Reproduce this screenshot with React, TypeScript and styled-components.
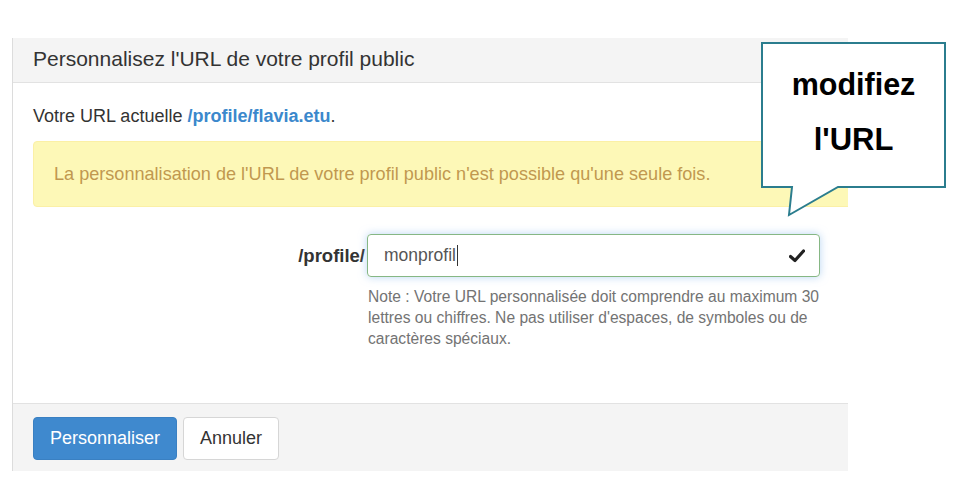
import React from "react";
import styled, { createGlobalStyle } from "styled-components";

const Global = createGlobalStyle`
  html, body { margin: 0; padding: 0; background: #fff; }
  body { font-family: "Liberation Sans", Arial, sans-serif; color: #333; }
  * { box-sizing: border-box; }
`;

const Page = styled.div`
  position: relative;
  width: 964px;
  height: 489px;
  padding-top: 38px;
  padding-left: 12px;
  overflow: hidden;
`;

const Clip = styled.div`
  width: 836px;
  overflow: hidden;
`;

const Panel = styled.div`
  width: 880px;
  border-left: 1px solid #dcdcdc;
  background: #fff;
`;

const Header = styled.div`
  height: 45px;
  background: #f4f4f4;
  border-bottom: 1px solid #e2e2e2;
  padding: 0 20px 3px 20px;
  display: flex;
  align-items: center;
  font-size: 21px;
  color: #333;
`;

const Body = styled.div`
  padding: 22px 20px 54px 20px;
`;

const Current = styled.p`
  margin: 0 0 14px 0;
  font-size: 18px;
  line-height: 22px;
`;

const Link = styled.a`
  color: #3b88cc;
  font-weight: bold;
  text-decoration: none;
`;

const Alert = styled.div`
  height: 66px;
  background: #fdf8b7;
  border: 1px solid #fbf0a6;
  border-radius: 4px;
  padding: 0 20px;
  display: flex;
  align-items: center;
  font-size: 18.1px;
  color: #c1984f;
`;

const FormRow = styled.div`
  margin-top: 27px;
  display: grid;
  grid-template-columns: 332px 453px;
  column-gap: 2px;
`;

const Label = styled.label`
  font-size: 18.5px;
  font-weight: bold;
  color: #333;
  text-align: right;
  line-height: 43px;
`;

const Field = styled.div`
  position: relative;
  height: 43px;
  border: 1px solid #86b784;
  border-radius: 4px;
  box-shadow: 0 0 8px rgba(130, 180, 235, 0.55);
  display: flex;
  align-items: center;
  padding: 0 16px;
  font-size: 17.5px;
  color: #555;
`;

const Caret = styled.span`
  display: inline-block;
  width: 1px;
  height: 21px;
  background: #333;
  margin-left: 1px;
`;

const Check = styled.svg`
  position: absolute;
  right: 14px;
  top: 14px;
`;

const Help = styled.p`
  grid-column: 2;
  margin: 9px 0 0 1px;
  font-size: 15.6px;
  line-height: 21px;
  color: #737373;
  width: 460px;
`;

const Footer = styled.div`
  height: 68px;
  background: #f4f4f4;
  border-top: 1px solid #e2e2e2;
  padding: 13px 20px 0 20px;
  display: flex;
  gap: 6px;
`;

const Button = styled.button<{ $primary?: boolean }>`
  height: 43px;
  padding: 0 16px;
  font-family: "Liberation Sans", Arial, sans-serif;
  font-size: 18px;
  border-radius: 4px;
  border: 1px solid ${(p) => (p.$primary ? "#3a80c2" : "#d6d6d6")};
  background: ${(p) => (p.$primary ? "#3f89ce" : "#fff")};
  color: ${(p) => (p.$primary ? "#fff" : "#333")};
`;

const Callout = styled.div`
  position: absolute;
  left: 760px;
  top: 41px;
  width: 190px;
  height: 180px;
`;

const CalloutText = styled.div`
  position: absolute;
  left: 2px;
  top: 2px;
  width: 183px;
  height: 144px;
  display: flex;
  flex-direction: column;
  align-items: center;
  font-family: "Liberation Sans", Arial, sans-serif;
  font-weight: bold;
  color: #000;
  padding-top: 24px;
`;

const Line = styled.div<{ $size: number; $gap: number }>`
  font-size: ${(p) => p.$size}px;
  line-height: ${(p) => p.$size + 4}px;
  margin-top: ${(p) => p.$gap}px;
`;

export default function App() {
  return (
    <Page>
      <Global />
      <Clip>
        <Panel>
          <Header>Personnalisez l'URL de votre profil public</Header>
          <Body>
            <Current>
              Votre URL actuelle <Link href="#">/profile/flavia.etu</Link>.
            </Current>
            <Alert>
              La personnalisation de l'URL de votre profil public n'est possible qu'une seule fois.
            </Alert>
            <FormRow>
              <Label>/profile/</Label>
              <Field>
                monprofil
                <Caret />
                <Check width="16" height="14" viewBox="0 0 16 14">
                  <path d="M1.5 7.5 L6 11.5 L14.5 2" fill="none" stroke="#222" strokeWidth="3.2" strokeLinecap="round" strokeLinejoin="round" />
                </Check>
              </Field>
              <Help>
                Note : Votre URL personnalisée doit comprendre au maximum 30 lettres ou chiffres. Ne pas utiliser d'espaces, de symboles ou de caractères spéciaux.
              </Help>
            </FormRow>
          </Body>
          <Footer>
            <Button $primary>Personnaliser</Button>
            <Button>Annuler</Button>
          </Footer>
        </Panel>
      </Clip>
      <Callout>
        <svg width="190" height="180" viewBox="0 0 190 180">
          <path
            d="M2 2 H185 V146 H78 L29 174 L32 146 H2 Z"
            fill="#fff"
            stroke="#2b7d8e"
            strokeWidth="2"
            strokeLinejoin="miter"
          />
        </svg>
        <CalloutText>
          <Line $size={30.5} $gap={0}>modifiez</Line>
          <Line $size={31} $gap={20}>l'URL</Line>
        </CalloutText>
      </Callout>
    </Page>
  );
}
